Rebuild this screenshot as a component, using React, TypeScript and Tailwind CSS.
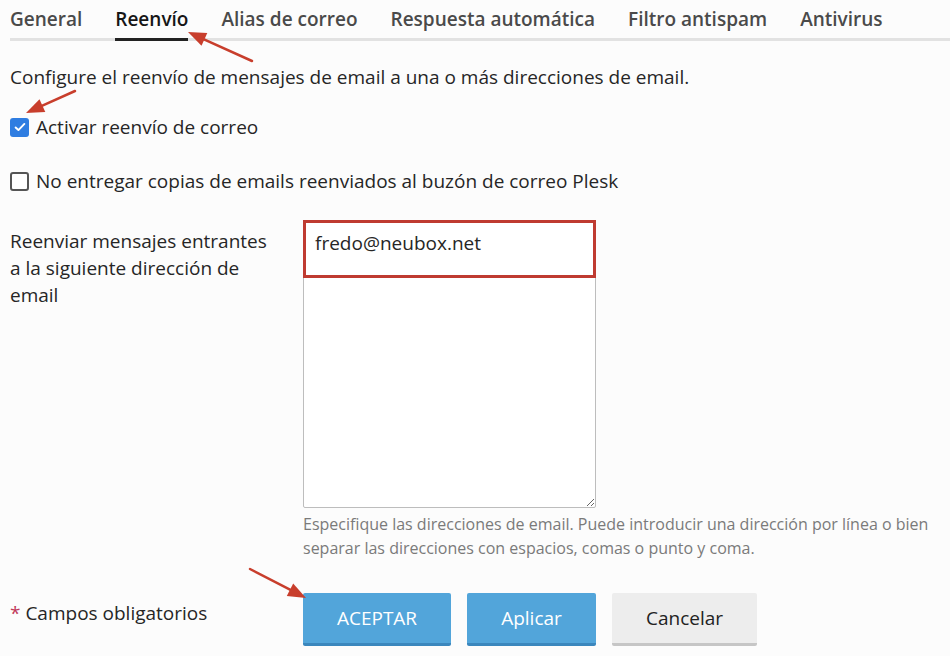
import { useState } from 'react';

const tabs = ['General', 'Reenvío', 'Alias de correo', 'Respuesta automática', 'Filtro antispam', 'Antivirus'];

function Check({ checked, onClick }: { checked: boolean; onClick: () => void }) {
  return (
    <span
      onClick={onClick}
      className={
        checked
          ? 'flex h-[19px] w-[19px] shrink-0 items-center justify-center rounded-[3px] bg-[#2f7de1]'
          : 'flex h-[19px] w-[19px] shrink-0 items-center justify-center rounded-[3px] border-2 border-[#555] bg-white'
      }
    >
      {checked && (
        <svg viewBox="0 0 16 16" className="h-[14px] w-[14px]">
          <path d="M3 8.5l3.2 3L13 4.5" fill="none" stroke="#fff" strokeWidth="2.2" strokeLinecap="round" strokeLinejoin="round" />
        </svg>
      )}
    </span>
  );
}

// red annotation arrows drawn over the screenshot
function Arrows() {
  return (
    <svg className="pointer-events-none absolute left-0 top-0" width="950" height="656">
      <g stroke="#c83e2c" strokeWidth="2.5" fill="#c83e2c" strokeLinecap="round">
        <line x1="252" y1="61" x2="204" y2="39.4" />
        <polygon points="188,32 207.3,33 201.5,45.8" stroke="none" />
        <line x1="75" y1="91" x2="42.4" y2="105.6" />
        <polygon points="26,113 45.3,112 39.5,99.2" stroke="none" />
        <line x1="250" y1="569" x2="290" y2="589.7" />
        <polygon points="306,598 286.8,595.9 293.2,583.5" stroke="none" />
      </g>
    </svg>
  );
}

export default function App() {
  const [forward, setForward] = useState(true);
  const [noCopies, setNoCopies] = useState(false);

  return (
    <div className="relative h-[656px] w-[950px] overflow-hidden bg-[#fcfcfc] pl-[10px] text-[#262626] font-['Open_Sans',sans-serif]">
      <div className="flex h-[41px] gap-[33px] border-b-[3px] border-[#e2e2e2]">
        {tabs.map((t) => (
          <div
            key={t}
            className={
              t === 'Reenvío'
                ? 'mb-[-3px] border-b-[3px] border-[#222] pt-[7px] text-[19px] leading-[24px] font-semibold text-[#161616]'
                : 'pt-[7px] text-[19px] leading-[24px] font-semibold text-[#4a4a4a]'
            }
          >
            {t}
          </div>
        ))}
      </div>

      <p className="mt-[24px] text-[19px] leading-[24px]">
        Configure el reenvío de mensajes de email a una o más direcciones de email.
      </p>

      <label className="mt-[26px] flex h-[24px] items-center gap-[7px] text-[19px]">
        <Check checked={forward} onClick={() => setForward(!forward)} />
        Activar reenvío de correo
      </label>

      <label className="mt-[30px] flex h-[24px] items-center gap-[7px] text-[19px]">
        <Check checked={noCopies} onClick={() => setNoCopies(!noCopies)} />
        No entregar copias de emails reenviados al buzón de correo Plesk
      </label>

      <div className="mt-[27px] flex">
        <div className="w-[293px] shrink-0 pr-[28px] pt-[8px] text-[19px] leading-[27px]">
          Reenviar mensajes entrantes a la siguiente dirección de email
        </div>
        <div className="w-[293px]">
          <div className="relative">
            <textarea
              defaultValue="fredo@neubox.net"
              className="block h-[288px] w-[293px] rounded-[2px] border border-[#bdbdbd] bg-white px-[11px] py-[9px] text-[19px] leading-[26px] text-[#262626] outline-none font-['Open_Sans',sans-serif]"
            />
            <div className="pointer-events-none absolute left-0 top-0 h-[58px] w-[293px] border-[3px] border-[#bf3b31]" />
          </div>
          <p className="mt-[4px] w-[640px] text-[16px] leading-[24px] text-[#7a7a7a]">
            Especifique las direcciones de email. Puede introducir una dirección por línea o bien separar las direcciones con espacios, comas o punto y coma.
          </p>
        </div>
      </div>

      <div className="mt-[33px] flex">
        <div className="w-[293px] shrink-0 pt-[8px] text-[19px] leading-[24px]">
          <span className="text-[#c0395a]">*</span> Campos obligatorios
        </div>
        <div className="flex gap-[16px]">
          <button className="h-[53px] w-[148px] rounded-[2px] border-b-[3px] border-[#3b87bd] bg-[#52a5da] text-[19px] text-white">
            ACEPTAR
          </button>
          <button className="h-[53px] w-[129px] rounded-[2px] border-b-[3px] border-[#3b87bd] bg-[#52a5da] text-[19px] text-white">
            Aplicar
          </button>
          <button className="h-[53px] w-[145px] rounded-[2px] border-b-[3px] border-[#c6c6c6] bg-[#ededed] text-[19px] text-[#222]">
            Cancelar
          </button>
        </div>
      </div>

      <Arrows />
    </div>
  );
}
